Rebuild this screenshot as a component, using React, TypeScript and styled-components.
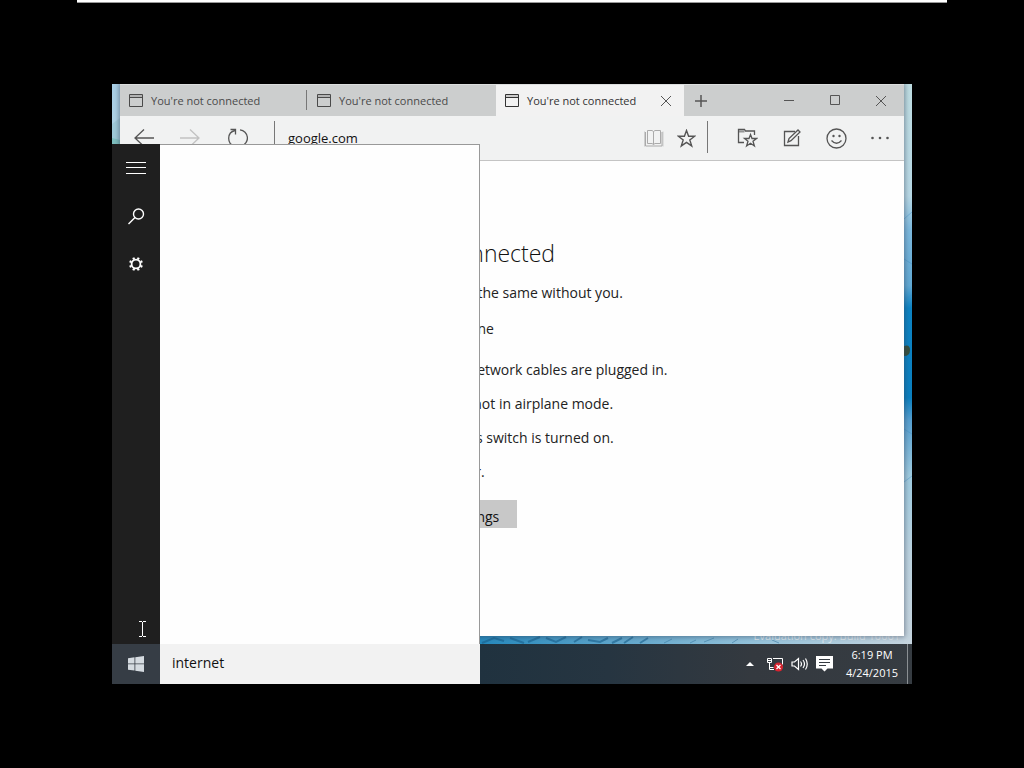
import React from "react";
import styled, { createGlobalStyle } from "styled-components";

const GlobalStyle = createGlobalStyle`
  *, *::before, *::after { box-sizing: border-box; }
  html, body { margin: 0; background: #000; }
  body { font-family: "Open Sans", "Noto Sans", "Segoe UI", sans-serif; color: #222; }
  button, input { font: inherit; color: inherit; border: 0; padding: 0; margin: 0; background: none; border-radius: 0; }
`;

const Page = styled.div`
  min-height: 100vh;
  display: flex;
  flex-direction: column;
  background: #000;
`;

const TopStrip = styled.div`
  height: 3px;
  margin: 0 77px;
  background: #fff;
  border-bottom: 1px solid #999;
`;

const Stage = styled.div`
  flex: 1;
  display: flex;
  padding: 81px 112px 84px;
`;

const Desktop = styled.div`
  flex: 1;
  min-width: 0;
  display: flex;
  flex-direction: column;
  overflow: hidden;
`;

const Workspace = styled.main`
  position: relative;
  flex: 1;
  min-height: 520px;
  overflow: hidden;
  background: linear-gradient(180deg, #a9cfe6 0, #b9dbe6 20%, #a6c8dc 100%);
`;

const Wallpaper = styled.svg`
  position: absolute;
  inset: 0;
  width: 100%;
  height: 100%;
`;

const Watermark = styled.div`
  position: absolute;
  right: 12px;
  bottom: 0;
  color: #dfe8ee;
  font-size: 11px;
  line-height: 16px;
`;

const BrowserWindow = styled.section`
  position: absolute;
  inset: 0 8px 8px;
  display: flex;
  flex-direction: column;
  background: #fefefe;
  box-shadow: 0 0 5px 1px rgba(50, 60, 80, 0.5);
`;

const TitleBar = styled.header`
  display: flex;
  height: 32px;
  background: #cccece;
  border-top: 1px solid #dcdede;
`;

const TabItem = styled.div<{ $active?: boolean; $divided?: boolean }>`
  position: relative;
  display: flex;
  align-items: center;
  width: 188px;
  padding: 0 10px 0 9px;
  background: ${(p) => (p.$active ? "#f2f2f2" : "transparent")};
  color: ${(p) => (p.$active ? "#333" : "#4a4a4a")};
  &::after {
    content: "";
    display: ${(p) => (p.$divided ? "block" : "none")};
    position: absolute;
    right: 1px;
    top: 5px;
    bottom: 6px;
    width: 1px;
    background: #777;
  }
`;

const TabButton = styled.button`
  flex: 1;
  display: flex;
  align-items: center;
  gap: 8px;
  font-size: 11px;
  line-height: 16px;
  white-space: nowrap;
`;

const IconButton = styled.button<{ $w: number }>`
  display: flex;
  align-items: center;
  justify-content: center;
  flex: none;
  width: ${(p) => p.$w}px;
  color: #555;
`;

const Gap = styled.span<{ $w: number }>`
  flex: none;
  width: ${(p) => p.$w}px;
`;

const Spacer = styled.div`
  flex: 1;
`;

const Toolbar = styled.div`
  display: flex;
  height: 45px;
  padding: 0 2px 0 1px;
  background: #f1f2f2;
  border-bottom: 1px solid #c4c4c4;
`;

const ToolDivider = styled.span`
  flex: none;
  width: 1px;
  height: 32px;
  margin-top: 5px;
  background: #777;
`;

const AddressInput = styled.input`
  && {
    flex: 1;
    min-width: 0;
    padding-left: 13px;
    font-size: 13px;
    color: #111;
    outline: none;
  }
`;

const PageBody = styled.article`
  flex: 1;
  padding: 75px 0 0 214px;
  font-size: 14px;
  line-height: 20px;
  color: #222;
`;

const Heading = styled.h1`
  margin: 0;
  font-size: 23px;
  line-height: 34px;
  font-weight: 300;
  color: #111;
`;

const Lead = styled.p`
  margin: 13px 0 16px;
`;

const Tips = styled.ul`
  display: flex;
  flex-direction: column;
  gap: 14px;
  margin: 21px 0 18px;
  padding: 0 0 0 22px;
  list-style: none;
`;

const SettingsButton = styled.button`
  && {
    height: 28px;
    padding: 5px 18px 0 14px;
    background: #c8c8c8;
    color: #111;
  }
`;

const StartPanel = styled.aside`
  position: absolute;
  left: 0;
  top: 60px;
  bottom: 0;
  display: flex;
`;

const Rail = styled.nav`
  display: flex;
  flex-direction: column;
  width: 48px;
  background: #1f1f1f;
`;

const RailButton = styled.button`
  display: flex;
  align-items: center;
  justify-content: center;
  height: 48px;
  color: #fff;
`;

const Results = styled.div`
  width: 320px;
  background: #fefefe;
  border-top: 1px solid #999;
  border-right: 1px solid #999;
`;

const Pointer = styled.svg`
  position: absolute;
  left: 26px;
  bottom: 7px;
`;

const Taskbar = styled.footer`
  display: flex;
  height: 40px;
  background: linear-gradient(90deg, #20323f 0, #20323f 46%, #263541 62%, #34393f 80%, #363c42 100%);
`;

const StartButton = styled.button`
  && {
    display: flex;
    align-items: center;
    justify-content: center;
    width: 48px;
    background: #363d45;
  }
`;

const SearchInput = styled.input`
  && {
    width: 320px;
    padding: 0 12px 3px;
    background: #f2f2f2;
    color: #111;
    font-size: 14px;
    outline: none;
  }
`;

const Tray = styled.div`
  display: flex;
  margin-left: auto;
`;

const TrayButton = styled(IconButton)`
  color: #fff;
`;

const Clock = styled.time`
  width: 70px;
  padding-top: 2px;
  text-align: center;
  color: #fff;
  font-size: 11px;
  line-height: 18px;
`;

const ShowDesktop = styled.button`
  && {
    width: 5px;
    border-left: 1px solid #8a8f93;
  }
`;

type GlyphProps = { w: number; h: number; children: React.ReactNode; sw?: number; color?: string };
const Glyph = ({ w, h, children, sw = 1, color = "currentColor" }: GlyphProps) => (
  <svg width={w} height={h} viewBox={`0 0 ${w} ${h}`} fill="none" stroke={color} strokeWidth={sw} aria-hidden="true">
    {children}
  </svg>
);

const PageIcon = () => (
  <Glyph w={14} h={13}>
    <path d="M.5.5h13v12H.5zM.5 3.5h13" />
    <path d="M1 2h12" opacity=".4" />
  </Glyph>
);

const CloseIcon = () => (
  <Glyph w={12} h={12}>
    <path d="M1 1l10 10M11 1L1 11" />
  </Glyph>
);

type TabProps = { active?: boolean; divided?: boolean };
const Tab = ({ active, divided }: TabProps) => (
  <TabItem $active={active} $divided={divided}>
    <TabButton>
      <PageIcon />
      You're not connected
    </TabButton>
    {active && (
      <IconButton $w={16} aria-label="Close tab">
        <CloseIcon />
      </IconButton>
    )}
  </TabItem>
);

const WallpaperArt = () => (
  <Wallpaper viewBox="0 0 800 560" preserveAspectRatio="none" aria-hidden="true">
    <defs>
      <linearGradient id="side" x1="0" y1="0" x2="0" y2="1">
        <stop offset="0" stopColor="#bfdde2" />
        <stop offset=".2" stopColor="#b8d9e6" />
        <stop offset=".26" stopColor="#7db9de" />
        <stop offset=".36" stopColor="#61a9d4" />
        <stop offset=".4" stopColor="#0d84c4" />
        <stop offset=".56" stopColor="#0b80c0" />
        <stop offset=".6" stopColor="#559fd0" />
        <stop offset=".7" stopColor="#9fcbe0" />
        <stop offset=".84" stopColor="#bcd3e0" />
        <stop offset="1" stopColor="#c6d5df" />
      </linearGradient>
      <linearGradient id="sea" gradientUnits="userSpaceOnUse" x1="0" y1="0" x2="800" y2="0">
        <stop offset=".46" stopColor="#2689bd" />
        <stop offset=".64" stopColor="#62a8cd" />
        <stop offset=".8" stopColor="#94c3dc" />
        <stop offset="1" stopColor="#c6d5df" />
      </linearGradient>
    </defs>
    <rect x="790" width="10" height="560" fill="url(#side)" />
    <path d="M792 262q6-2 6 4t-6 6z" fill="#36503f" />
    <path d="M792 135l8-7M792 175l8 5M792 215l8-4M792 345l8 5M792 398l8-6" stroke="#3e8fc8" opacity=".4" />
    <rect x="0" y="550" width="792" height="10" fill="url(#sea)" />
    <path
      d="M370 559l12-5 10 3M398 554l14 5M416 558l12-5M434 554l10 4 10-5M462 558l8-5M476 556l12 2 8-4M500 559l10-5M512 559l9-6M528 559l8-5"
      stroke="#175f8c"
      strokeWidth="2"
      fill="none"
      opacity=".6"
    />
    <path d="M552 559l8-4M578 559l6-3M592 558l10-4M620 559l6-4M660 556l7 3" stroke="#3a7ba3" fill="none" opacity=".6" />
    <path d="M0 40l8-6v26H0z" fill="#9fcad9" />
    <path d="M0 54l8 2v4H0z" fill="#7fc0c0" />
  </Wallpaper>
);

export default function App() {
  return (
    <Page>
      <GlobalStyle />
      <TopStrip />
      <Stage>
        <Desktop>
          <Workspace>
            <WallpaperArt />
            <Watermark>Evaluation copy. Build 10061</Watermark>
            <BrowserWindow>
              <TitleBar>
                <Tab divided />
                <Tab />
                <Tab active />
                <IconButton $w={34} aria-label="New tab">
                  <Glyph w={12} h={12} sw={1.5}>
                    <path d="M6 0v12M0 6h12" />
                  </Glyph>
                </IconButton>
                <Spacer />
                <IconButton $w={46} aria-label="Minimize">
                  <Glyph w={11} h={11}>
                    <path d="M0 5.5h10" />
                  </Glyph>
                </IconButton>
                <IconButton $w={46} aria-label="Maximize">
                  <Glyph w={11} h={11}>
                    <path d="M.5.5h9v9h-9z" />
                  </Glyph>
                </IconButton>
                <IconButton $w={46} aria-label="Close">
                  <CloseIcon />
                </IconButton>
              </TitleBar>
              <Toolbar>
                <IconButton $w={46} aria-label="Back">
                  <Glyph w={20} h={18} sw={1.3}>
                    <path d="M20 9H1M10 .5L1 9l9 8.5" />
                  </Glyph>
                </IconButton>
                <IconButton $w={46} aria-label="Forward" disabled>
                  <Glyph w={20} h={18} sw={1.3} color="#c2c2c2">
                    <path d="M0 9h19M10 .5L19 9l-9 8.5" />
                  </Glyph>
                </IconButton>
                <IconButton $w={50} aria-label="Refresh">
                  <Glyph w={20} h={20} sw={1.3}>
                    <path d="M7 2.500a8 8 0 0 0-.5 15.500M12 1.800a8.300 8.300 0 0 1 1.500 16.200" />
                    <path d="M2.500 1.500h5v5" />
                  </Glyph>
                </IconButton>
                <Gap $w={11} />
                <ToolDivider />
                <AddressInput aria-label="Address" defaultValue="google.com" />
                <IconButton $w={32} aria-label="Reading view" disabled>
                  <Glyph w={20} h={18} color="#aaa">
                    <path d="M9.500 2.500V15.500M3.500 1.500H8l1.500 1 1.500-1h5.500v13H11l-1.500 1-1.500-1H3.500zM1.500 3v14h16.500V3" />
                    <path d="M.5 2.500v15M19 2.500v15" opacity=".5" />
                  </Glyph>
                </IconButton>
                <IconButton $w={32} aria-label="Add to favorites">
                  <Glyph w={19} h={19} sw={1.4}>
                    <path d="M9.500 1.500l2.100 5.700h6.100l-4.900 3.700 1.900 6-5.200-3.600-5.200 3.600 1.900-6L1.300 7.200h6.100z" />
                  </Glyph>
                </IconButton>
                <Gap $w={5} />
                <ToolDivider />
                <Gap $w={17} />
                <IconButton $w={45} aria-label="Hub">
                  <Glyph w={21} h={20} sw={1.3}>
                    <path d="M7 14.500H1.500V1.500h6l1 1.500h9v4" />
                    <path d="M1.500 3.500h6" strokeWidth="2" opacity=".6" />
                    <path d="M13.500 6.500l1.500 4h4.500L16 13.300l1.400 4.700-3.900-2.700-3.900 2.700 1.400-4.700-3.500-2.800H12z" />
                  </Glyph>
                </IconButton>
                <IconButton $w={44} aria-label="Make a web note">
                  <Glyph w={18} h={18} sw={1.3}>
                    <path d="M12 2.500H1.500v14h14V7" />
                    <path d="M5 13l1-3.500 9-8.500 2 2-9 8.700z" />
                  </Glyph>
                </IconButton>
                <IconButton $w={44} aria-label="Send feedback">
                  <Glyph w={21} h={21} sw={1.3}>
                    <circle cx="10.5" cy="10.5" r="9.5" />
                    <path d="M5.500 12.500q5 5.500 10 0" />
                    <g fill="currentColor" stroke="none">
                      <circle cx="7.5" cy="8" r="1.2" />
                      <circle cx="13.5" cy="8" r="1.2" />
                    </g>
                  </Glyph>
                </IconButton>
                <IconButton $w={44} aria-label="More actions">
                  <svg width="18" height="4" viewBox="0 0 18 4" fill="#555" aria-hidden="true">
                    <circle cx="1.5" cy="2" r="1.3" />
                    <circle cx="9" cy="2" r="1.3" />
                    <circle cx="16.5" cy="2" r="1.3" />
                  </svg>
                </IconButton>
              </Toolbar>
              <PageBody>
                <Heading>You're not connected</Heading>
                <Lead>And the web just isn't the same without you.</Lead>
                <Lead>Let's get you back online</Lead>
                <Tips>
                  <li>Check that these network cables are plugged in.</li>
                  <li>Check that you're not in airplane mode.</li>
                  <li>Ensure the wireless switch is turned on.</li>
                  <li>Restart your router.</li>
                </Tips>
                <SettingsButton>Check network settings</SettingsButton>
              </PageBody>
            </BrowserWindow>
            <StartPanel>
              <Rail>
                <RailButton aria-label="Menu">
                  <Glyph w={20} h={12}>
                    <path d="M0 .5h20M0 5.5h20M0 11.5h20" />
                  </Glyph>
                </RailButton>
                <RailButton aria-label="Search">
                  <Glyph w={17} h={17} sw={1.4}>
                    <circle cx="10.5" cy="6" r="5" />
                    <path d="M7 9.500L.5 16" />
                  </Glyph>
                </RailButton>
                <RailButton aria-label="Settings">
                  <Glyph w={16} h={16} sw={1.8}>
                    <circle cx="8" cy="8" r="4.4" />
                    <path d="M12.500 9.900l1.900.8M9.900 12.500l.8 1.900M6.100 12.500l-.8 1.900M3.500 9.900l-1.900.8M3.500 6.100l-1.900-.8M6.100 3.500l-.8-1.900M9.900 3.500l.8-1.900M12.500 6.100l1.900-.8" strokeWidth="2.2" />
                  </Glyph>
                </RailButton>
              </Rail>
              <Results />
              <Pointer width="9" height="16" viewBox="0 0 9 16" fill="none" stroke="#fff" aria-hidden="true">
                <path d="M1 .5h3M5 .5h3M4.500 1v14M1 15.500h3M5 15.500h3" />
              </Pointer>
            </StartPanel>
          </Workspace>
          <Taskbar>
            <StartButton aria-label="Start">
              <svg width="16" height="16" viewBox="0 0 16 16" fill="#d5dbe0" aria-hidden="true">
                <path d="M0 2.200L6.500 1.300v6.200H0zM7.300 1.200L16 0v7.500H7.300zM0 8.300h6.500v6.300L0 13.700zM7.300 8.300H16V16l-8.700-1.200z" />
              </svg>
            </StartButton>
            <SearchInput aria-label="Search" defaultValue="internet" />
            <Tray>
              <TrayButton $w={24} aria-label="Show hidden icons">
                <svg width="8" height="4" viewBox="0 0 8 4" fill="#fff" aria-hidden="true">
                  <path d="M4 0l4 4H0z" />
                </svg>
              </TrayButton>
              <TrayButton $w={26} aria-label="Network">
                <Glyph w={17} h={15}>
                  <path d="M.5 1.500h4v4h-4zM2.500 6v6.500H7M2.500 10.500h4M6 1.500h9.500v6M1 3.500h3" />
                  <circle cx="11.5" cy="10" r="4.5" fill="#d8232f" stroke="none" />
                  <path d="M9.500 8l4 4M13.500 8l-4 4" strokeWidth="1.3" />
                </Glyph>
              </TrayButton>
              <TrayButton $w={23} aria-label="Volume">
                <Glyph w={18} h={14} sw={1.2}>
                  <path d="M1 5h2.500L7.500 1.500v11L3.500 9H1zM9.500 4.500q2 2.500 0 5M12 3q3 4 0 8M14.500 1.500q3.500 5.500 0 11" />
                </Glyph>
              </TrayButton>
              <TrayButton $w={26} aria-label="Notifications">
                <svg width="17" height="16" viewBox="0 0 17 16" fill="#fff" aria-hidden="true">
                  <path d="M0 0h17v12.500h-5.500L8.500 15.500l-3-3H0z" />
                  <path d="M3 3.500h11M3 6.500h11M3 9.500h7" stroke="#363c42" />
                </svg>
              </TrayButton>
              <Clock dateTime="2015-04-24T18:19">
                6:19 PM
                <br />
                4/24/2015
              </Clock>
              <ShowDesktop aria-label="Show desktop" />
            </Tray>
          </Taskbar>
        </Desktop>
      </Stage>
    </Page>
  );
}
